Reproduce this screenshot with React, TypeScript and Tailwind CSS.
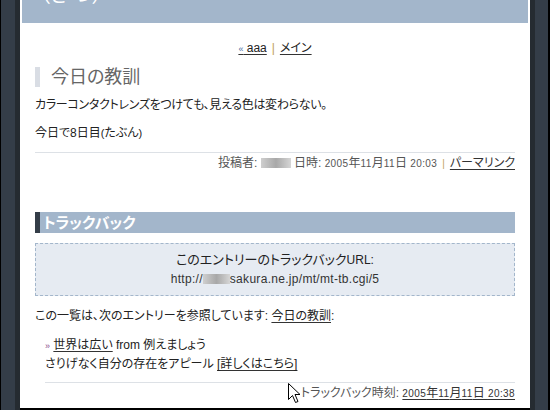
const Num = ({ children }: { children: React.ReactNode }) => (
  <span className="text-[10px] tracking-[0.4px] font-['Liberation_Sans',sans-serif]">{children}</span>
);

const Blur = ({ w }: { w: string }) => (
  <span
    className={`inline-block h-[10px] align-[-1px] bg-gradient-to-r from-[#cfcfcf] via-[#a8a8a8] to-[#d6d6d6] blur-[0.6px] ${w}`}
  ></span>
);

const Cursor = () => (
  <svg
    className="absolute left-[288px] top-[383px]"
    width="13"
    height="21"
    viewBox="0 0 13 21"
  >
    <path
      d="M0.5 0.5 L0.5 16.5 L4.5 12.5 L7.5 19.5 L10 18.5 L7 11.5 L12 11.5 Z"
      fill="#fff"
      stroke="#000"
      strokeWidth="1"
      strokeLinejoin="miter"
    />
  </svg>
);

const App = () => {
  return (
    <div className="relative w-[550px] h-[410px] overflow-hidden bg-black flex font-['Liberation_Sans','Noto_Sans_CJK_JP',sans-serif] [font-feature-settings:'palt'] text-[#222] text-[12px]">
      {/* left frame */}
      <div className="w-[1px] bg-black"></div>
      <div className="w-[14px] bg-[#343d48]"></div>
      <div className="w-[5px] bg-[#252b31]"></div>

      {/* page */}
      <div className="w-[510px] h-[408px] bg-white flex flex-col">
        <div className="mx-[2px] h-[23px] bg-[#a3b6cb] overflow-hidden">
          <div className="ml-[18px] -mt-[15px] text-white text-[20px] leading-[20px]">（さ つ）</div>
        </div>

        <div className="px-[15px] flex flex-col">
          <div className="mt-[17px] h-[16px] leading-[16px] text-center">
            <a className="underline underline-offset-2 decoration-[#333]">
              <span className="text-[9px] text-[#4a6aa0]">«</span> aaa
            </a>
            <span className="text-[#c0a060] mx-[5px]">|</span>
            <a className="underline underline-offset-2 decoration-[#333]">メイン</a>
          </div>

          <div className="mt-[11px] h-[20px] border-l-[5px] border-[#d9dde4] pl-[11px] text-[18px] leading-[20px] text-[#666]">
            今日の教訓
          </div>

          <p className="mt-[10px] leading-[16px] tracking-[-0.3px]">カラーコンタクトレンズをつけても、見える色は変わらない。</p>
          <p className="mt-[12px] leading-[16px]">
            今日で8日目<span className="text-[11px]">(</span>たぶん<span className="text-[11px]">)</span>
          </p>

          <div className="mt-[11px] border-t border-[#dde1e6]"></div>
          <div className="mt-[2px] leading-[16px] text-right text-[#555]">
            投稿者: <Blur w="w-[30px]" /> 日時: <Num>2005</Num>年<Num>11</Num>月<Num>11</Num>日 <Num>20:03</Num>
            <span className="text-[10px] text-[#c0a060] mx-[5px]">|</span>
            <a className="underline underline-offset-2 text-[#333] decoration-[#333]">パーマリンク</a>
          </div>

          <div className="mt-[40px] h-[21px] flex bg-[#a3b6cb]">
            <div className="w-[5px] bg-[#343d48]"></div>
            <div className="pl-[3px] text-white font-bold text-[15px] leading-[21px]">トラックバック</div>
          </div>

          <div className="mt-[10px] h-[53px] border border-dashed border-[#a3b6cb] bg-[#e6ebf2] pt-[8px] text-center">
            <div className="leading-[16px] text-[13px]">
              このエントリーのトラックバック<span className="text-[12px]">URL:</span>
            </div>
            <div className="mt-[3px] leading-[16px] text-[#333] tracking-[0.3px]">
              http://<Blur w="w-[27px]" />sakura.ne.jp/mt/mt-tb.cgi/5
            </div>
          </div>

          <p className="mt-[12px] leading-[16px]">
            この一覧は、次のエントリーを参照しています:{" "}
            <a className="underline underline-offset-2 decoration-[#333]">今日の教訓</a>:
          </p>

          <div className="mt-[12px] ml-[10px] leading-[18px]">
            <div>
              <span className="text-[9px] text-[#8a4a8a]">»</span>{" "}
              <a className="underline underline-offset-2 decoration-[#333]">世界は広い</a> from 例えましょう
            </div>
            <div>
              さりげなく自分の存在をアピール{" "}
              <a className="underline underline-offset-2 decoration-[#333]">[詳しくはこちら]</a>
            </div>
          </div>

          <div className="mt-[9px] ml-[10px] border-t border-[#dde1e6]"></div>
          <div className="mt-[2px] leading-[16px] text-right text-[#555]">
            トラックバック時刻:{" "}
            <a className="underline underline-offset-2 text-[#333] decoration-[#333]">
              <Num>2005</Num>年<Num>11</Num>月<Num>11</Num>日 <Num>20:38</Num>
            </a>
          </div>
        </div>
      </div>

      {/* right frame */}
      <div className="w-[5px] bg-[#252b31]"></div>
      <div className="w-[13px] bg-[#343d48]"></div>
      <div className="w-[2px] bg-black"></div>

      <Cursor />
    </div>
  );
};

export default App;
